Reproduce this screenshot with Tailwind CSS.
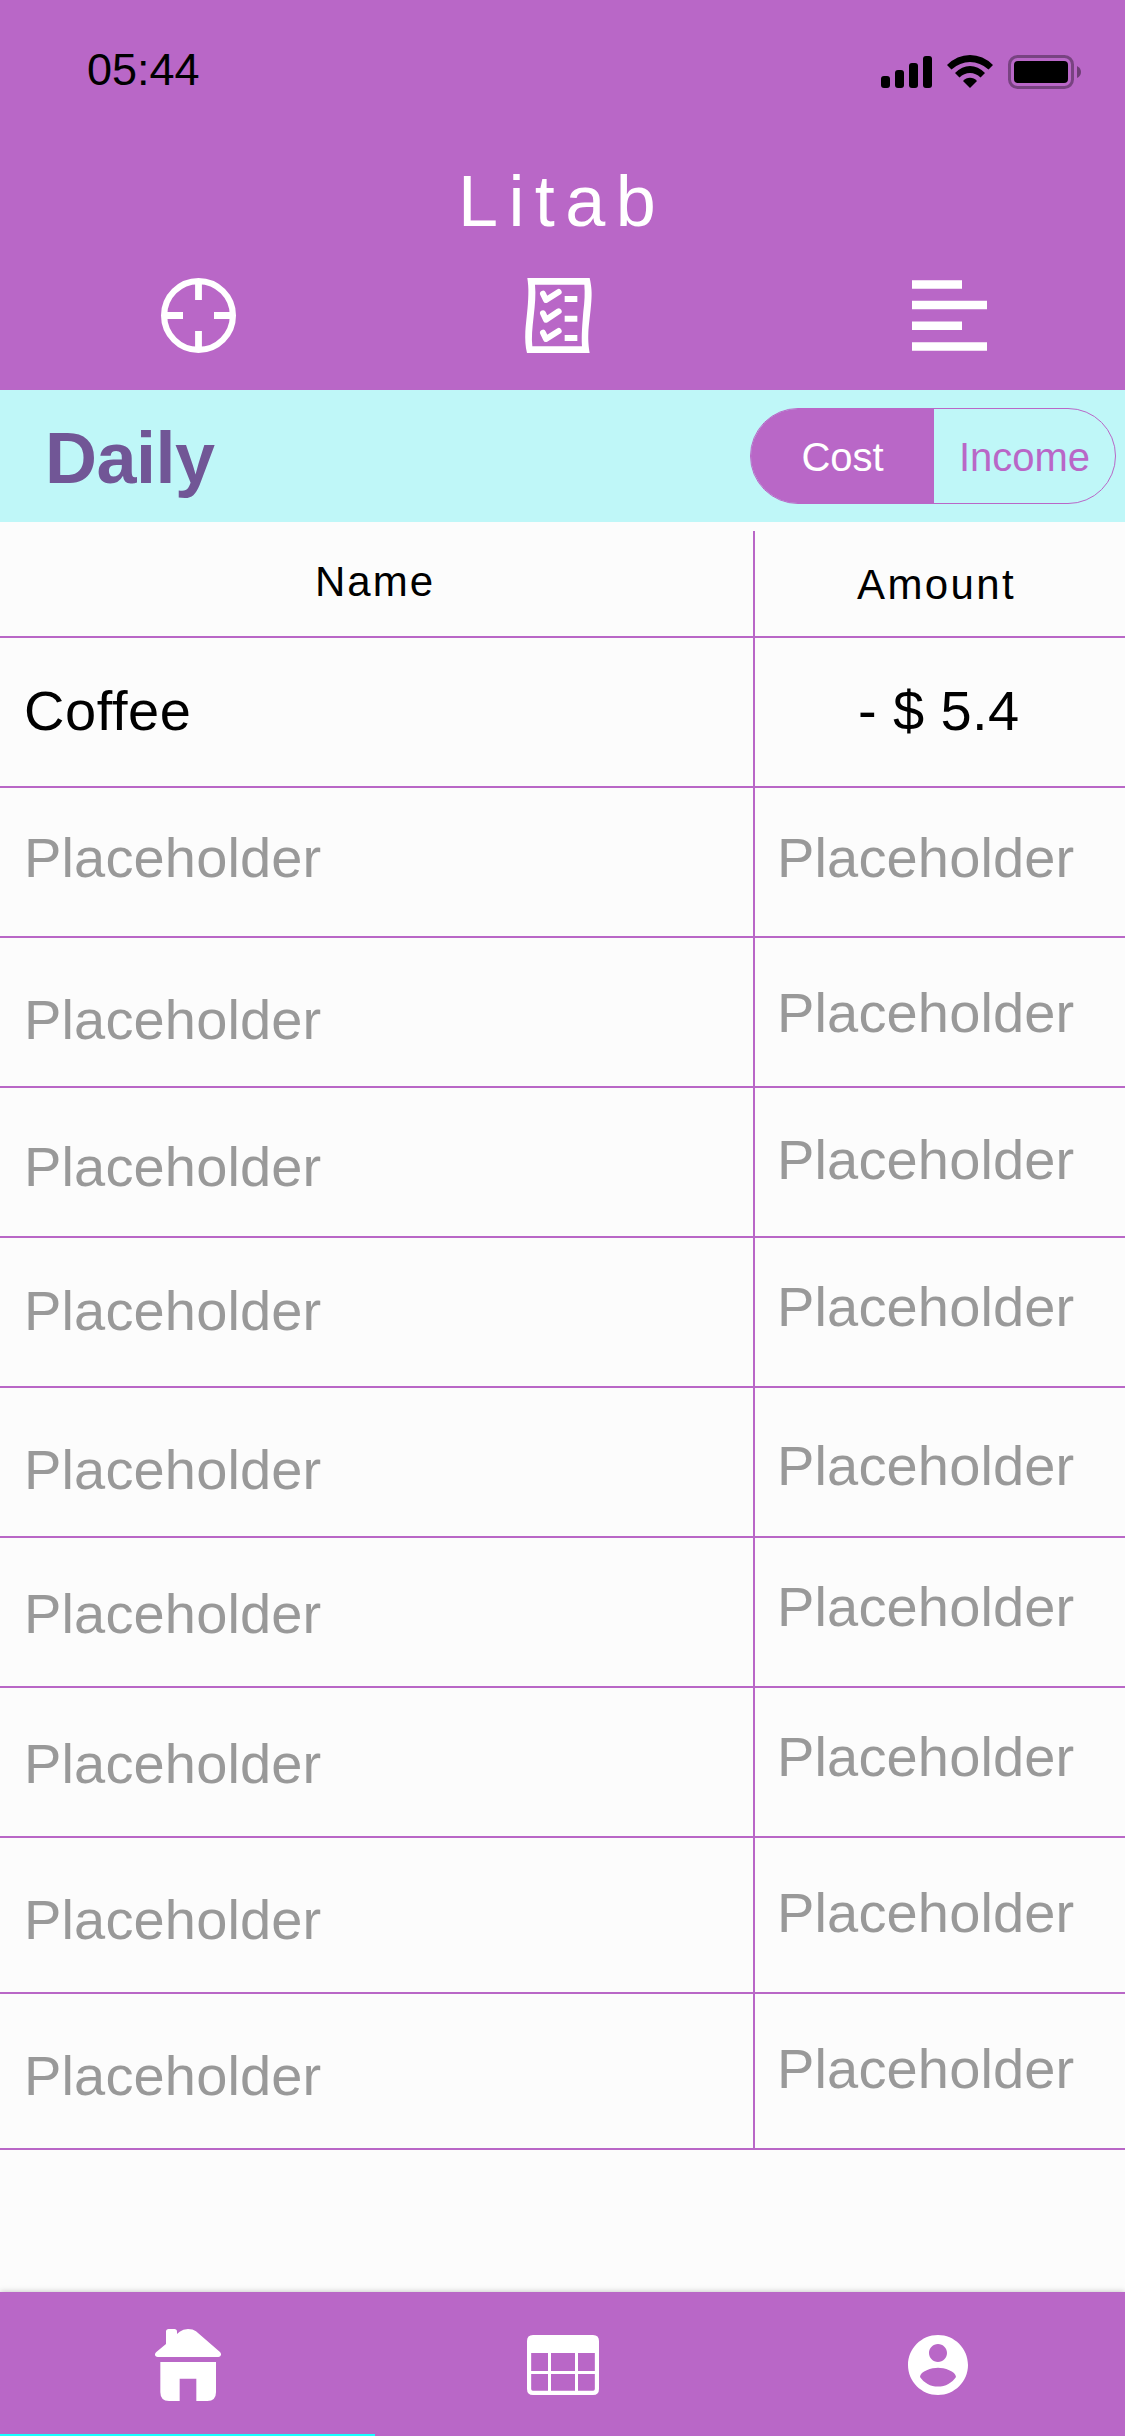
<!DOCTYPE html>
<html lang="en">
<head>
<meta charset="utf-8">
<title>Litab</title>
<script src="https://cdn.jsdelivr.net/npm/@tailwindcss/browser@4"></script>
</head>
<body class="w-[1125px] h-[2436px] overflow-hidden flex flex-col bg-[#fcfcfc] text-black font-['Liberation_Sans',Arial,sans-serif]">

<header class="h-[390px] shrink-0 bg-[#b967c7] flex flex-col">
  <!-- Status bar -->
  <div class="h-[132px] flex justify-between items-start pl-[87px] pr-[44px]">
    <div class="pt-[45px] text-[45px] leading-[50px]">05:44</div>
    <svg class="mt-[55px] w-[200px] h-[34px]" viewBox="0 0 200 34">
      <rect x="0" y="21" width="9" height="12" rx="3"/>
      <rect x="14" y="15" width="9" height="18" rx="3"/>
      <rect x="28" y="8" width="9" height="25" rx="3"/>
      <rect x="42" y="1" width="9" height="32" rx="3"/>
      <path d="M66 10 Q76 0 89 0 Q102 0 112 10 L107.500 14.500 Q99 7 89 7 Q79 7 70.500 14.500Z"/>
      <path d="M74 18 Q81 11 89 11 Q97 11 104 18 L99.500 22.500 Q95 18 89 18 Q83 18 78.500 22.500Z"/>
      <path d="M82 26 Q85 22.700 89 22.700 Q93 22.700 96 26 L89 33Z"/>
      <rect x="128.500" y="1.500" width="63" height="31" rx="8" fill="none" stroke="#000" stroke-opacity=".35" stroke-width="3"/>
      <rect x="133" y="6" width="54" height="22" rx="4"/>
      <path d="M196 11 Q200 13 200 17 Q200 21 196 23Z" fill-opacity=".4"/>
    </svg>
  </div>
  <h1 class="h-[146px] pt-[28px] pl-[458px] text-[72px] leading-[82px] tracking-[10.4px] text-white">Litab</h1>
  <div class="flex items-start pl-[161px]">
    <svg class="w-[75px] h-[75px]" viewBox="0 0 75 75" fill="none" stroke="#fff">
      <circle cx="37.500" cy="37.500" r="34.400" stroke-width="6.200"/>
      <path stroke-width="6.800" d="M37.500 4V22M37.500 53V71M4 37.500H22M53 37.500H71"/>
    </svg>
    <svg class="w-[67px] h-[75px] ml-[289px]" viewBox="0 0 201 225">
      <path fill="#fff" fill-rule="evenodd" d="M8 0H194C200 28 201 45 199 70C196 110 191 140 190 165C189 190 191 205 194 225H6C1 205 0 185 1 160C4 120 9 90 10 50C11 30 9 15 7 0ZM30 20C33 50 30 80 26 115C22 150 19 180 22 205H171C169 170 172 140 175 100C179 70 180 45 178 20Z"/>
      <g fill="none" stroke="#fff" stroke-width="18" stroke-linecap="round" stroke-linejoin="round">
        <path d="M54 47L63 66L101 42"/><path d="M54 106L63 125L101 100"/><path d="M54 164L63 183L101 159"/>
      </g>
      <path fill="#fff" d="M119 54h38v18h-38zM119 113h38v18h-38zM119 171h38v18h-38z"/>
    </svg>
    <svg class="w-[75px] h-[75px] ml-[320px]" viewBox="0 0 75 75" fill="#fff">
      <path d="M0 2.200h50v8.500H0zM0 22.700h75v8.500H0zM0 43.500h50V52H0zM0 64.300h75v8.500H0z"/>
    </svg>
  </div>
</header>

<section class="h-[132px] shrink-0 bg-[#bff7f8] flex justify-between pl-[45px] pr-[9px]">
  <h2 class="pt-[27px] text-[72px] leading-[82px] font-bold text-[#715696] tracking-[-0.5px]">Daily</h2>
  <div class="mt-[18px] w-[366px] h-[96px] rounded-full border border-[#b967c7] overflow-hidden flex text-[40px] leading-[96px]">
    <div class="w-[183px] bg-[#b967c7] text-white text-center">Cost</div>
    <div class="flex-1 text-[#b967c7] text-center">Income</div>
  </div>
</section>

<main class="shrink-0 flex flex-col text-[56px] leading-[60px] tracking-[0.15px]">
  <div class="h-[116px] flex border-b-2 border-[#b967c7] text-[42px] leading-[48px]">
    <div class="w-[753px] pt-[36px] pl-[315px] tracking-[2px]">Name</div>
    <div class="flex-1 mt-[9px] border-l-2 border-[#b967c7] pt-[30px] pl-[102px] tracking-[2.4px]">Amount</div>
  </div>
  <div class="h-[150px] flex border-b-2 border-[#b967c7]">
    <div class="w-[753px] pl-6 pt-[43px] tracking-[0.6px]">Coffee</div>
    <div class="flex-1 border-l-2 border-[#b967c7] pt-[43px] pl-[103px] tracking-[0.4px]">- $ 5.4</div>
  </div>
  <div class="h-[150px] flex border-b-2 border-[#b967c7] text-[#999]">
    <div class="w-[753px] pl-6 pt-[40px]">Placeholder</div>
    <div class="flex-1 border-l-2 border-[#b967c7] pl-[22px] pt-[40px]">Placeholder</div>
  </div>
  <div class="h-[150px] flex border-b-2 border-[#b967c7] text-[#999]">
    <div class="w-[753px] pl-6 pt-[52px]">Placeholder</div>
    <div class="flex-1 border-l-2 border-[#b967c7] pl-[22px] pt-[45px]">Placeholder</div>
  </div>
  <div class="h-[150px] flex border-b-2 border-[#b967c7] text-[#999]">
    <div class="w-[753px] pl-6 pt-[49px]">Placeholder</div>
    <div class="flex-1 border-l-2 border-[#b967c7] pl-[22px] pt-[42px]">Placeholder</div>
  </div>
  <div class="h-[150px] flex border-b-2 border-[#b967c7] text-[#999]">
    <div class="w-[753px] pl-6 pt-[43px]">Placeholder</div>
    <div class="flex-1 border-l-2 border-[#b967c7] pl-[22px] pt-[39px]">Placeholder</div>
  </div>
  <div class="h-[150px] flex border-b-2 border-[#b967c7] text-[#999]">
    <div class="w-[753px] pl-6 pt-[52px]">Placeholder</div>
    <div class="flex-1 border-l-2 border-[#b967c7] pl-[22px] pt-[48px]">Placeholder</div>
  </div>
  <div class="h-[150px] flex border-b-2 border-[#b967c7] text-[#999]">
    <div class="w-[753px] pl-6 pt-[46px]">Placeholder</div>
    <div class="flex-1 border-l-2 border-[#b967c7] pl-[22px] pt-[39px]">Placeholder</div>
  </div>
  <div class="h-[150px] flex border-b-2 border-[#b967c7] text-[#999]">
    <div class="w-[753px] pl-6 pt-[46px]">Placeholder</div>
    <div class="flex-1 border-l-2 border-[#b967c7] pl-[22px] pt-[39px]">Placeholder</div>
  </div>
  <div class="h-[156px] flex border-b-2 border-[#b967c7] text-[#999]">
    <div class="w-[753px] pl-6 pt-[52px]">Placeholder</div>
    <div class="flex-1 border-l-2 border-[#b967c7] pl-[22px] pt-[45px]">Placeholder</div>
  </div>
  <div class="h-[156px] flex border-b-2 border-[#b967c7] text-[#999]">
    <div class="w-[753px] pl-6 pt-[52px]">Placeholder</div>
    <div class="flex-1 border-l-2 border-[#b967c7] pl-[22px] pt-[45px]">Placeholder</div>
  </div>
</main>

<nav class="mt-auto h-[144px] shrink-0 bg-[#b967c7] grid grid-cols-3 shadow-[0_0_6px_rgba(0,0,0,0.25)]">
  <div class="flex justify-center items-center border-b-2 border-[#18ffff] pt-[4px]">
    <svg class="w-[66px] h-[72px]" viewBox="0 0 198 216" fill="#fff">
      <path d="M33 45V8Q33 0 41 0H58Q66 0 66 8V15L74 8Q84 0 99 0Q114 0 123 7L194 68Q199 73 198 78Q196 84 190 84H8Q2 84 0 79Q-1 74 4 69Z"/>
      <path d="M16 99H183V190Q183 216 157 216H124V149H74V216H42Q16 216 16 190Z"/>
    </svg>
  </div>
  <div class="flex justify-center items-center pt-[2px]">
    <svg class="w-[72px] h-[60px]" viewBox="0 0 216 180">
      <path fill="#fff" fill-rule="evenodd" d="M18 0H198Q216 0 216 18V162Q216 180 198 180H18Q0 180 0 162V18Q0 0 18 0ZM12.500 54V108H63V54ZM72 54V108H144V54ZM153 54V108H203.500V54ZM12.500 117V162Q12.500 167 17.500 167H63V117ZM72 117V167H144V117ZM153 117V167H198.500Q203.500 167 203.500 162V117Z"/>
    </svg>
  </div>
  <div class="flex justify-center items-center pt-[2px]">
    <svg class="w-[60px] h-[60px]" viewBox="2 2 20 20" fill="#fff">
      <path d="M12 2C6.480 2 2 6.480 2 12s4.480 10 10 10 10-4.480 10-10S17.520 2 12 2zm0 3c1.660 0 3 1.340 3 3s-1.340 3-3 3-3-1.340-3-3 1.340-3 3-3zm0 14.200c-2.500 0-4.710-1.280-6-3.220.03-1.990 4-3.080 6-3.080 1.990 0 5.970 1.090 6 3.080-1.290 1.940-3.500 3.220-6 3.220z"/>
    </svg>
  </div>
</nav>
</body>
</html>
